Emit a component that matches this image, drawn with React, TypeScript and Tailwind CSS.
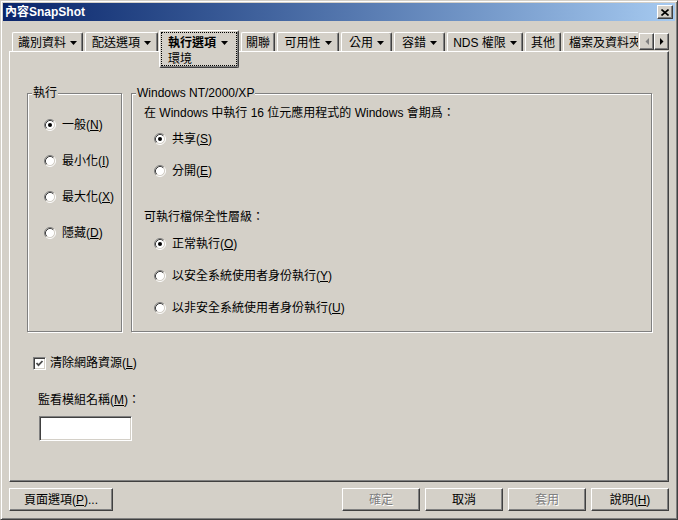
import type { ReactNode } from 'react';

// classic Win2000 property dialog – 內容SnapShot

const raised =
  'border border-t-white border-l-white border-r-[#404040] border-b-[#404040] shadow-[inset_-1px_-1px_#808080]';

const tabs = [
  { label: '識別資料', arrow: true, w: 'w-[71px]' },
  { label: '配送選項', arrow: true, w: 'w-[73px]' },
  { label: '執行選項', arrow: true, w: 'w-[80px]', selected: true },
  { label: '關聯', arrow: false, w: 'w-[34px]' },
  { label: '可用性', arrow: true, w: 'w-[62px]' },
  { label: '公用', arrow: true, w: 'w-[51px]' },
  { label: '容錯', arrow: true, w: 'w-[51px]' },
  { label: 'NDS 權限', arrow: true, w: 'w-[76px]' },
  { label: '其他', arrow: false, w: 'w-[36px]' },
];

function Arrow() {
  return (
    <svg width="7" height="4" viewBox="0 0 7 4" className="shrink-0">
      <polygon points="0,0 7,0 3.5,4" fill="#000" />
    </svg>
  );
}

function Radio({ checked = false }: { checked?: boolean }) {
  return (
    <svg width="12" height="12" viewBox="0 0 12 12" className="shrink-0">
      <circle cx="6" cy="6" r="4.5" fill="#fff" />
      <path d="M2.11 9.89 A5.5 5.5 0 0 1 9.89 2.11" stroke="#808080" fill="none" />
      <path d="M9.89 2.11 A5.5 5.5 0 0 1 2.11 9.89" stroke="#fff" fill="none" />
      <path d="M2.82 9.18 A4.5 4.5 0 0 1 9.18 2.82" stroke="#404040" fill="none" />
      <path d="M9.18 2.82 A4.5 4.5 0 0 1 2.82 9.18" stroke="#d4d0c8" fill="none" />
      {checked && <circle cx="6" cy="6" r="2" fill="#000" />}
    </svg>
  );
}

function RadioRow({ checked, children, h }: { checked?: boolean; children: ReactNode; h: string }) {
  return (
    <div className={`flex items-center gap-[6px] ${h}`}>
      <Radio checked={checked} />
      <span className="leading-none">{children}</span>
    </div>
  );
}

function Group({ title, className, children }: { title: string; className: string; children: ReactNode }) {
  return (
    <div
      className={`relative h-[239px] border border-[#808080] shadow-[inset_1px_1px_#fff,1px_1px_#fff] ${className}`}
    >
      <span className="absolute -top-[7px] left-[4px] bg-[#d4d0c8] px-[1px] leading-[13px]">{title}</span>
      {children}
    </div>
  );
}

function Button({ children, disabled, w }: { children: ReactNode; disabled?: boolean; w: string }) {
  return (
    <div
      className={`${w} h-[23px] flex items-center justify-center ${raised} ${
        disabled ? 'text-[#808080] [text-shadow:1px_1px_#fff]' : 'text-black'
      }`}
    >
      {children}
    </div>
  );
}

export default function App() {
  return (
    <div className="w-[678px] h-[520px] bg-[#d4d0c8] p-[2px] border border-t-[#d4d0c8] border-l-[#d4d0c8] border-r-[#404040] border-b-[#404040] shadow-[inset_1px_1px_#fff,inset_-1px_-1px_#808080] font-['Liberation_Sans','Noto_Sans_CJK_TC',sans-serif] text-[12px] text-black overflow-hidden">
      {/* title bar */}
      <div className="h-[18px] flex items-center justify-between bg-gradient-to-r from-[#0a246a] to-[#a6caf0] pl-[2px] pr-[2px]">
        <span className="text-white font-bold text-[12px] leading-none">內容SnapShot</span>
        <div className={`w-[16px] h-[14px] bg-[#d4d0c8] flex items-center justify-center ${raised}`}>
          <svg width="8" height="7" viewBox="0 0 8 7">
            <path d="M0.5 0.5 L7.5 6.5 M7.5 0.5 L0.5 6.5" stroke="#000" strokeWidth="1.6" />
          </svg>
        </div>
      </div>

      {/* tab strip */}
      <div className="ml-[6px] mt-[9px] w-[660px] h-[21px] flex items-start relative z-10">
        <div className="flex items-start gap-[2px] ml-[3px]">
          {tabs.map((t) =>
            t.selected ? (
              <div
                key={t.label}
                className={`${t.w} -ml-[1px] h-[38px] bg-[#d4d0c8] border border-t-white border-l-white border-r-[#404040] border-b-[#404040] shadow-[inset_-1px_-1px_#808080] rounded-t-[2px] rounded-b-[2px] p-[1px]`}
              >
                <div className="h-full border border-dotted border-black pl-[6px] pt-[4px] flex flex-col gap-[4px]">
                  <div className="flex items-center gap-[5px] h-[12px]">
                    <span className="font-bold leading-none">{t.label}</span>
                    <Arrow />
                  </div>
                  <span className="leading-none h-[12px]">環境</span>
                </div>
              </div>
            ) : (
              <div
                key={t.label}
                className={`${t.w} mt-[2px] h-[19px] pt-[2px] flex items-center justify-center gap-[4px] border border-b-0 border-t-white border-l-white border-r-[#404040] shadow-[inset_-1px_0_#808080] rounded-t-[2px] whitespace-nowrap`}
              >
                <span className="leading-none">{t.label}</span>
                {t.arrow && <Arrow />}
              </div>
            )
          )}
          <div className="w-[75px] mt-[2px] h-[19px] pt-[2px] flex items-center pl-[5px] border-t border-l border-t-white border-l-white rounded-tl-[2px] overflow-hidden whitespace-nowrap">
            <span className="leading-none">檔案及資料夾</span>
          </div>
        </div>
        <div className="ml-auto mt-[3px] flex">
          <div className={`w-[15px] h-[17px] flex items-center justify-center ${raised}`}>
            <svg width="4" height="7" viewBox="0 0 4 7">
              <polygon points="4,0 4,7 0.5,3.5" fill="#808080" />
            </svg>
          </div>
          <div className={`w-[15px] h-[17px] flex items-center justify-center ${raised}`}>
            <svg width="4" height="7" viewBox="0 0 4 7">
              <polygon points="0,0 0,7 3.5,3.5" fill="#000" />
            </svg>
          </div>
        </div>
      </div>

      {/* tab page */}
      <div className="ml-[6px] w-[660px] h-[431px] border border-t-white border-l-white border-r-[#404040] border-b-[#404040] shadow-[inset_-1px_-1px_#808080] pl-[17px] pt-[41px]">
        <div className="flex gap-[9px]">
          <Group title="執行" className="w-[95px]">
            <div className="pt-[13px] pl-[16px] flex flex-col">
              <RadioRow checked h="h-[36px]">
                一般(<u>N</u>)
              </RadioRow>
              <RadioRow h="h-[36px]">
                最小化(<u>I</u>)
              </RadioRow>
              <RadioRow h="h-[36px]">
                最大化(<u>X</u>)
              </RadioRow>
              <RadioRow h="h-[36px]">
                隱藏(<u>D</u>)
              </RadioRow>
            </div>
          </Group>

          <Group title="Windows NT/2000/XP" className="w-[521px]">
            <div className="pt-[9px] pl-[12px] flex flex-col">
              <div className="h-[20px] flex items-center leading-none">
                在 Windows 中執行 16 位元應用程式的 Windows 會期爲：
              </div>
              <div className="pl-[10px]">
                <RadioRow checked h="h-[32px]">
                  共享(<u>S</u>)
                </RadioRow>
                <RadioRow h="h-[32px]">
                  分開(<u>E</u>)
                </RadioRow>
              </div>
              <div className="mt-[19px] h-[22px] flex items-center leading-none">可執行檔保全性層級：</div>
              <div className="pl-[10px]">
                <RadioRow checked h="h-[32px]">
                  正常執行(<u>O</u>)
                </RadioRow>
                <RadioRow h="h-[32px]">
                  以安全系統使用者身份執行(<u>Y</u>)
                </RadioRow>
                <RadioRow h="h-[32px]">
                  以非安全系統使用者身份執行(<u>U</u>)
                </RadioRow>
              </div>
            </div>
          </Group>
        </div>

        <div className="mt-[21px] ml-[6px] h-[20px] flex items-center gap-[4px]">
          <div className="w-[13px] h-[13px] border border-t-[#808080] border-l-[#808080] border-r-white border-b-white shadow-[inset_1px_1px_#404040,inset_-1px_-1px_#d4d0c8] bg-white flex items-center justify-center">
            <svg width="9" height="9" viewBox="0 0 9 9">
              <path d="M1.5 4 L3.5 6.2 L7.5 2" stroke="#4a4a4a" strokeWidth="1.8" fill="none" />
            </svg>
          </div>
          <span className="leading-none">
            清除網路資源(<u>L</u>)
          </span>
        </div>

        <div className="mt-[17px] ml-[11px] h-[20px] flex items-center leading-none">
          監看模組名稱(<u>M</u>)：
        </div>
        <div className="mt-[6px] ml-[12px] w-[93px] h-[25px] bg-white border border-t-[#808080] border-l-[#808080] border-r-white border-b-white shadow-[inset_1px_1px_#404040,inset_-1px_-1px_#d4d0c8]" />
      </div>

      {/* bottom buttons */}
      <div className="mt-[6px] mx-[6px] flex items-center">
        <Button w="w-[104px]">
          頁面選項(<u>P</u>)...
        </Button>
        <div className="ml-auto flex gap-[5px]">
          <Button w="w-[78px]" disabled>
            確定
          </Button>
          <Button w="w-[78px]">取消</Button>
          <Button w="w-[78px]" disabled>
            套用
          </Button>
          <Button w="w-[78px]">
            說明(<u>H</u>)
          </Button>
        </div>
      </div>
    </div>
  );
}
